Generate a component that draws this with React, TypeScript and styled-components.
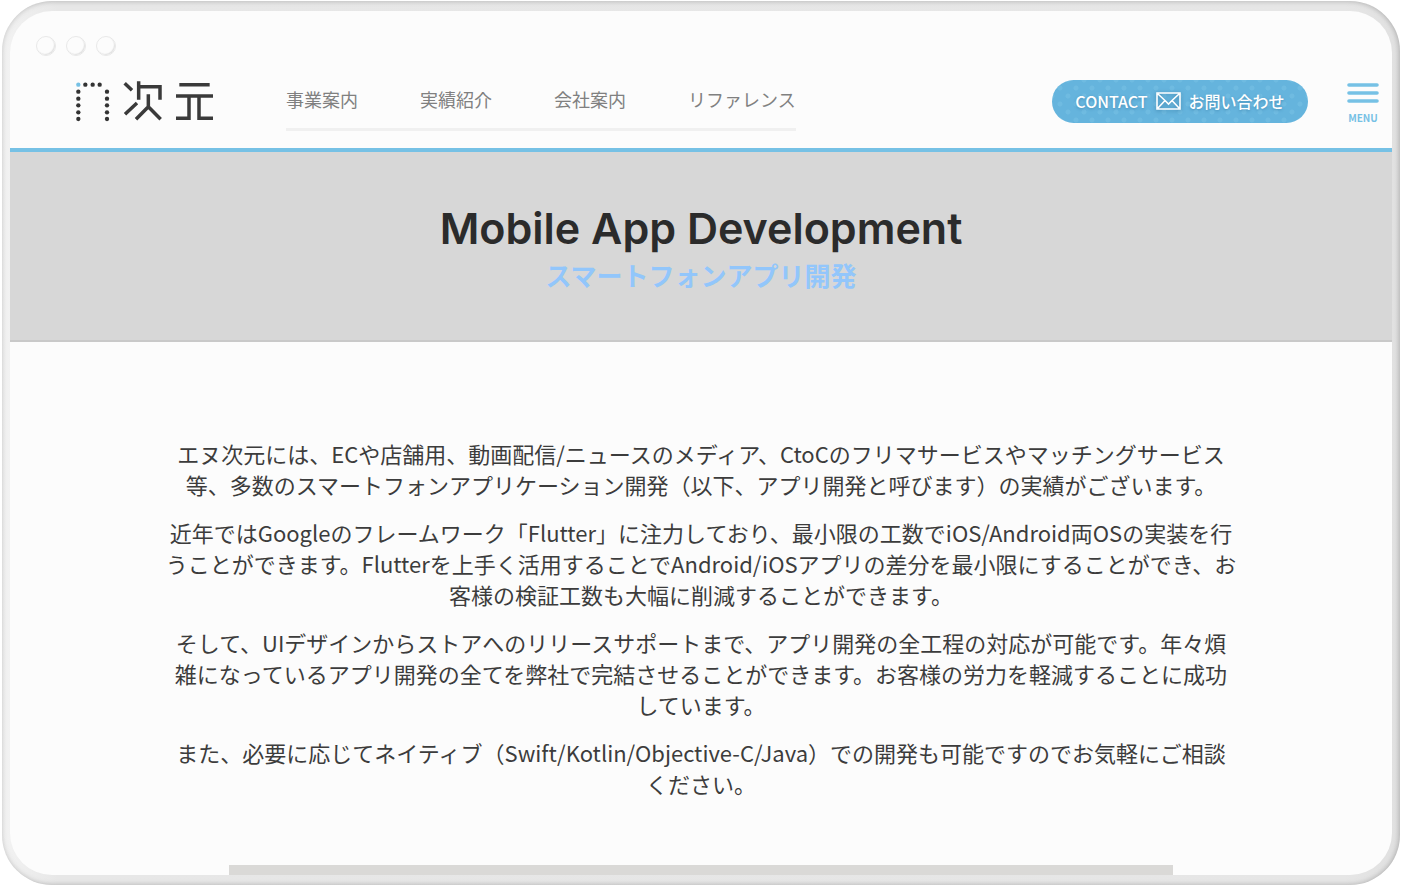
import React from "react";
import styled, { createGlobalStyle } from "styled-components";

const GlobalStyle = createGlobalStyle`
  *, *::before, *::after { box-sizing: border-box; }
  body {
    margin: 0;
    background: #fff;
    color: #3c3c3c;
    font-family: "Noto Sans CJK JP", "Noto Sans", sans-serif;
  }
  h1, p { margin: 0; }
`;

const Page = styled.div`
  display: flex;
  min-height: 100vh;
  padding: 1px 2px;
`;

const Frame = styled.div`
  flex: 1;
  display: flex;
  padding: 10px 8px;
  border-radius: 50px;
  background: linear-gradient(90deg, #f3f3f3, #e7e7e7 4%, #e6e6e6 96%, #e0e0e0);
  box-shadow: inset 0 0 6px rgba(0, 0, 0, 0.14), inset -1px 0 4px rgba(0, 0, 0, 0.12);
`;

const Screen = styled.div`
  flex: 1;
  min-width: 0;
  display: flex;
  flex-direction: column;
  overflow: hidden;
  border-radius: 42px;
  background: #fcfcfc;
`;

const WindowBar = styled.div`
  display: flex;
  gap: 10px;
  padding: 25px 26px 0;
`;

const WindowDot = styled.span`
  width: 20px;
  height: 20px;
  border: 1px solid #e8e8e8;
  border-radius: 50%;
  box-shadow: inset -1px -1px 1px #e2e2e2;
`;

const Header = styled.header`
  display: flex;
  align-items: center;
  height: 96px;
  padding: 0 13px 2px 65px;
  border-bottom: 4px solid #76c1e5;
`;

const LogoLink = styled.a`
  display: flex;
  flex: none;
  margin-right: 71px;
`;

const Nav = styled.nav`
  display: flex;
  gap: 62px;
  height: 60px;
  padding-top: 15px;
  border-bottom: 3px solid #f0f0f0;
`;

const NavLink = styled.a`
  color: #808080;
  font-size: 18px;
  line-height: 26px;
  white-space: nowrap;
  text-decoration: none;
`;

const ContactButton = styled.button`
  display: flex;
  flex: none;
  align-items: center;
  justify-content: center;
  gap: 8px;
  width: 256px;
  height: 43px;
  margin-left: auto;
  padding: 0;
  border: 0;
  border-radius: 22px;
  background-color: #65b4dd;
  background-image: radial-gradient(circle, #6fbbe1 2px, transparent 3px),
    radial-gradient(circle, #6fbbe1 2px, transparent 3px);
  background-position: 0 0, 8px 8px;
  background-size: 16px 16px;
  color: #fff;
  font-family: inherit;
  font-size: 16px;
  font-weight: 500;
  line-height: 24px;
  text-shadow: 0 1px 3px rgba(30, 90, 130, 0.4);
`;

const EnvelopeIcon = styled.svg`
  filter: drop-shadow(0 1px 2px rgba(30, 90, 130, 0.5));
`;

const MenuButton = styled.button`
  display: flex;
  flex: none;
  flex-direction: column;
  align-items: center;
  gap: 9px;
  width: 32px;
  margin-left: 39px;
  padding: 4px 0 0;
  border: 0;
  background: none;
  color: #76c1e5;
  font-family: inherit;
  font-size: 10px;
  font-weight: 700;
  line-height: 12px;
`;

const Hero = styled.section`
  padding: 49px 0 45px;
  border-bottom: 2px solid #c9c9c9;
  background: #d7d7d7;
  text-align: center;
`;

const HeroTitle = styled.h1`
  color: #2b2b2b;
  font-family: Inter, sans-serif;
  font-size: 43px;
  font-weight: 600;
  line-height: 54px;
`;

const HeroSubtitle = styled.p`
  color: #92c6fb;
  font-size: 26px;
  font-weight: 700;
  line-height: 40px;
`;

const Content = styled.main`
  flex: 1;
  display: flex;
  flex-direction: column;
  align-items: center;
  gap: 66px;
  padding-top: 96px;
`;

const Copy = styled.div`
  display: flex;
  flex-direction: column;
  gap: 17px;
  max-width: 90%;
  font-size: 22px;
  line-height: 31px;
  text-align: center;
  white-space: pre-line;
`;

const NextSection = styled.div`
  flex: 1;
  width: 944px;
  max-width: 100%;
  min-height: 10px;
  background: #dad9d7;
`;

const navItems = ["事業案内", "実績紹介", "会社案内", "リファレンス"];

const paragraphs = [
  `エヌ次元には、ECや店舗用、動画配信/ニュースのメディア、CtoCのフリマサービスやマッチングサービス
等、多数のスマートフォンアプリケーション開発（以下、アプリ開発と呼びます）の実績がございます。`,
  `近年ではGoogleのフレームワーク「Flutter」に注力しており、最小限の工数でiOS/Android両OSの実装を行
うことができます。Flutterを上手く活用することでAndroid/iOSアプリの差分を最小限にすることができ、お
客様の検証工数も大幅に削減することができます。`,
  `そして、UIデザインからストアへのリリースサポートまで、アプリ開発の全工程の対応が可能です。年々煩
雑になっているアプリ開発の全てを弊社で完結させることができます。お客様の労力を軽減することに成功
しています。`,
  `また、必要に応じてネイティブ（Swift/Kotlin/Objective-C/Java）での開発も可能ですのでお気軽にご相談
ください。`,
];

const logoRows = [63, 84, 104, 125, 145];

function Logo() {
  return (
    <svg width="140" height="42" viewBox="46 28 420 126" aria-hidden="true">
      <circle cx="56" cy="42" r="6.5" fill="#76c1e5" />
      <g fill="#333">
        {[77, 99, 120].map((x) => (
          <circle key={x} cx={x} cy="42" r="6.5" />
        ))}
        {logoRows.map((y) => (
          <circle key={y} cx="56" cy={y} r="6.5" />
        ))}
        {logoRows.map((y) => (
          <circle key={y} cx="142" cy={y} r="6.5" />
        ))}
      </g>
      <g fill="none" stroke="#3a3a3a" strokeWidth="10.5">
        <path d="M195 38L217 59M196 131L232 97M237 32V87M237 48H301V87M266 71V108L229 146M266 108L303 146" />
        <path d="M359 42H450M349 76H460M349 143H388V76M460 143H418V76" />
      </g>
    </svg>
  );
}

export default function App() {
  return (
    <>
      <GlobalStyle />
      <Page>
        <Frame>
          <Screen>
            <WindowBar>
              <WindowDot />
              <WindowDot />
              <WindowDot />
            </WindowBar>
            <Header>
              <LogoLink href="#" aria-label="エヌ次元">
                <Logo />
              </LogoLink>
              <Nav>
                {navItems.map((item) => (
                  <NavLink key={item} href="#">
                    {item}
                  </NavLink>
                ))}
              </Nav>
              <ContactButton type="button">
                <span>CONTACT</span>
                <EnvelopeIcon width="25" height="18" viewBox="0 0 25 18" aria-hidden="true">
                  <path
                    d="M1 1H24V17H1ZM2 2L9 8.500L12.500 12L16 8.500L23 2M2 16L9 8.500M23 16L16 8.500"
                    fill="none"
                    stroke="#fff"
                    strokeWidth="1.6"
                  />
                </EnvelopeIcon>
                <span>お問い合わせ</span>
              </ContactButton>
              <MenuButton type="button">
                <svg width="32" height="20" viewBox="0 0 32 20" aria-hidden="true">
                  <path
                    d="M2 2H30M2 10H30M2 18H30"
                    stroke="#76c1e5"
                    strokeWidth="3.6"
                    strokeLinecap="round"
                  />
                </svg>
                MENU
              </MenuButton>
            </Header>
            <Hero>
              <HeroTitle>Mobile App Development</HeroTitle>
              <HeroSubtitle>スマートフォンアプリ開発</HeroSubtitle>
            </Hero>
            <Content>
              <Copy>
                {paragraphs.map((text) => (
                  <p key={text}>{text}</p>
                ))}
              </Copy>
              <NextSection />
            </Content>
          </Screen>
        </Frame>
      </Page>
    </>
  );
}
